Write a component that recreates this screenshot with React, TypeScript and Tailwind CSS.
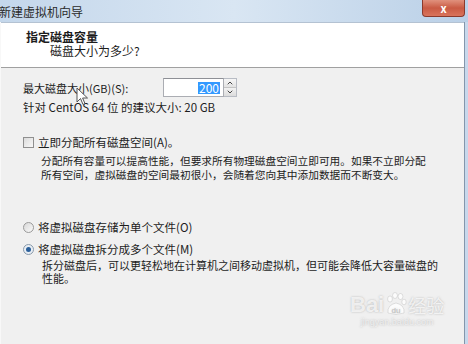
import { ChevronDown, ChevronUp } from 'lucide-react';

const font = { fontFamily: '"Noto Sans CJK SC", sans-serif' };

function Spinner() {
  return (
    <div className="flex h-[19px]">
      <div className="flex h-full w-[61px] items-center justify-end border border-[#abadb3] border-t-[#8e9096] bg-white pr-[3px]">
        <span className="bg-[#3399ff] px-[1px] text-[12px] leading-[12px] text-white">200</span>
      </div>
      <div className="flex h-full w-[13px] flex-col border border-l-0 border-[#b8bcc4]">
        <div className="flex flex-1 items-center justify-center bg-gradient-to-b from-[#f6f6f6] to-[#e2e2e2] text-[#444]">
          <ChevronUp size={8} strokeWidth={3} />
        </div>
        <div className="flex flex-1 items-center justify-center border-t border-[#c4c4c4] bg-gradient-to-b from-[#f2f2f2] to-[#dcdcdc] text-[#444]">
          <ChevronDown size={8} strokeWidth={3} />
        </div>
      </div>
    </div>
  );
}

export default function App() {
  return (
    <div className="relative flex h-[344px] w-[468px] flex-col overflow-hidden bg-[#f0f0f0] text-[12px] text-[#1c1c1c]" style={font}>
      {/* title bar */}
      <div className="flex h-[22px] items-start bg-gradient-to-r from-[#c4d7eb] via-[#d9e6f3] to-[#bad0e7]">
        <span className="-ml-[1px] mt-[5px] text-[12px] leading-[14px] text-[#2a2a2a]">新建虚拟机向导</span>
        <div className="ml-auto mr-[3px] flex h-[17px] w-[43px] items-center justify-center rounded-b-[4px] border border-t-0 border-[#8b3a2c] bg-gradient-to-b from-[#e0917d] via-[#c95a43] to-[#d9745c] text-[11px] font-bold leading-none text-white">
          x
        </div>
      </div>

      <div className="flex flex-1">
        <div className="flex flex-1 flex-col border-l border-[#f8f8f8]">
          {/* header */}
          <div className="h-[46px] border-y border-t-[#b4c2d2] border-b-[#a0a0a0] bg-white pl-[25px] pt-[7px]">
            <div className="text-[12px] font-bold leading-[14px]">指定磁盘容量</div>
            <div className="pl-[24px] text-[12px] leading-[14px]">磁盘大小为多少?</div>
          </div>

          {/* content */}
          <div className="flex flex-1 flex-col whitespace-nowrap pl-[22px]">
            <div className="mt-[10px] flex items-center">
              <span className="w-[140px] text-[11px] leading-[14px]">最大磁盘大小(GB)(S):</span>
              <Spinner />
            </div>
            <div className="mt-[3px] text-[11.5px] leading-[14px]">针对 CentOS 64 位 的建议大小: 20 GB</div>

            <div className="mt-[21px] flex items-center">
              <div className="h-[11px] w-[11px] border border-[#8f8f8f] bg-gradient-to-br from-[#dcdcdc] to-[#f8f8f8]" />
              <span className="ml-[4px] text-[11.5px] leading-[14px]">立即分配所有磁盘空间(A)。</span>
            </div>
            <div className="mt-[5px] pl-[18px] text-[10.7px] leading-[14px]">
              <div>分配所有容量可以提高性能，但要求所有物理磁盘空间立即可用。如果不立即分配</div>
              <div>所有空间，虚拟磁盘的空间最初很小，会随着您向其中添加数据而不断变大。</div>
            </div>

            <div className="mt-[38px] flex items-center">
              <div className="h-[11px] w-[11px] rounded-full border border-[#9a9a9a] bg-gradient-to-br from-[#d8d8d8] to-[#fafafa]" />
              <span className="ml-[4px] text-[11.5px] leading-[14px]">将虚拟磁盘存储为单个文件(O)</span>
            </div>
            <div className="mt-[8px] flex items-center">
              <div className="flex h-[11px] w-[11px] items-center justify-center rounded-full border border-[#8a9aab] bg-[#e8eef4]">
                <div className="h-[5px] w-[5px] rounded-full bg-[#2a5f9a]" />
              </div>
              <span className="ml-[4px] text-[11.5px] leading-[14px]">将虚拟磁盘拆分成多个文件(M)</span>
            </div>
            <div className="mt-[3px] pl-[19px] text-[11px] leading-[13px]">
              <div>拆分磁盘后，可以更轻松地在计算机之间移动虚拟机，但可能会降低大容量磁盘的</div>
              <div>性能。</div>
            </div>
          </div>
        </div>
        {/* right window frame */}
        <div className="w-[4px] border-l border-[#8496ab] bg-[#c7d8ec]" />
      </div>

      {/* mouse cursor */}
      <svg className="absolute left-[76px] top-[87px]" width="13" height="19" viewBox="0 0 13 19">
        <path d="M1 1 L1 15 L4.5 11.5 L7 17.5 L9 16.6 L6.6 11 L11.5 11 Z" fill="#fff" stroke="#555" strokeWidth="1" />
      </svg>

      {/* watermark */}
      <div className="absolute left-[350px] top-[292px] flex flex-col items-center text-white/75 [text-shadow:0_0_2px_rgba(120,120,120,0.5)]">
        <div className="flex items-end">
          <span className="text-[22px] font-bold leading-[22px]" style={{ fontFamily: '"Liberation Sans", sans-serif' }}>Bai</span>
          <svg width="22" height="24" viewBox="0 0 22 24" className="mx-[1px]">
            <g fill="rgba(255,255,255,0.8)" stroke="rgba(150,150,150,0.45)" strokeWidth="0.6">
              <ellipse cx="5" cy="7" rx="2.4" ry="3" />
              <ellipse cx="10" cy="3.5" rx="2.4" ry="3" />
              <ellipse cx="15.5" cy="4.5" rx="2.4" ry="3" />
              <ellipse cx="19" cy="10" rx="2.2" ry="2.8" />
              <path d="M3 21 Q2 13 11 11 Q20 13 19 21 Q11 24 3 21 Z" />
            </g>
            <text x="11" y="21" fontSize="8" textAnchor="middle" fill="rgba(180,180,180,0.85)" fontFamily="Liberation Sans, sans-serif">du</text>
          </svg>
          <span className="text-[18px] leading-[22px]">经验</span>
        </div>
        <span className="text-[9px] leading-[12px] text-white/60" style={{ fontFamily: '"Liberation Sans", sans-serif' }}>jingyan.baidu.com</span>
      </div>
    </div>
  );
}
